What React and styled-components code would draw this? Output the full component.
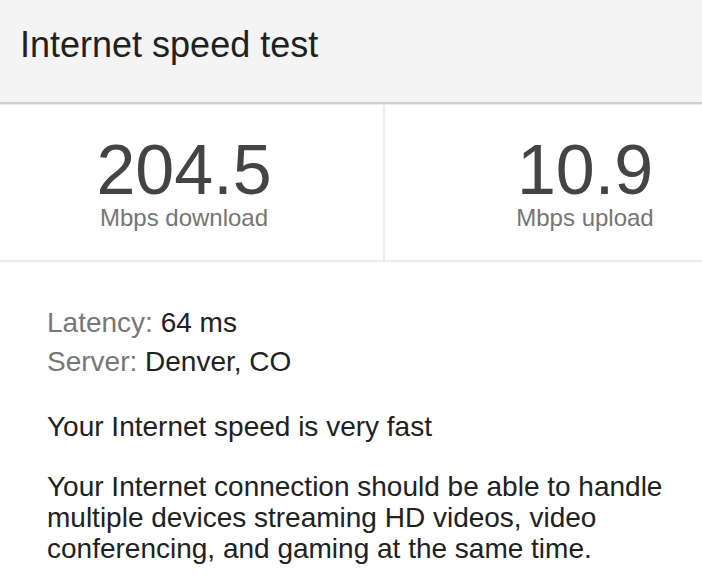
import React from "react";
import styled, { createGlobalStyle } from "styled-components";

const GlobalStyle = createGlobalStyle`
  html, body {
    margin: 0;
    padding: 0;
    background: #ffffff;
  }

  body {
    font-family: "Liberation Sans", Arial, Helvetica, sans-serif;
    color: #222222;
  }
`;

const Card = styled.div`
  width: 702px;
  overflow: hidden;
`;

const Header = styled.header`
  background-color: #f4f4f4;
  padding: 24px 20px 36px;
  border-bottom: 2px solid #cfcfcf;
  box-shadow: 0 1px 0 #ececec;
`;

const Title = styled.h1`
  margin: 0;
  font-size: 36px;
  font-weight: 400;
  line-height: normal;
  color: #212121;
`;

const Stats = styled.div`
  display: grid;
  grid-template-columns: 385px 1fr;
  margin-top: 1px;
  border-bottom: 2px solid #ececec;
`;

const Stat = styled.div`
  display: flex;
  flex-direction: column;
  align-items: center;
  padding: ${({ side }) =>
    side === "left" ? "33px 15px 28px 0" : "33px 0 28px 83px"};
  border-right: ${({ side }) =>
    side === "left" ? "2px solid #ececec" : "none"};
`;

const Value = styled.div`
  font-size: 70px;
  line-height: 64px;
  color: #444444;
`;

const Unit = styled.div`
  margin-top: 2px;
  font-size: 24px;
  line-height: 28px;
  color: #757575;
`;

const Details = styled.div`
  padding: 41px 30px 0 47px;
  font-size: 28px;
`;

const InfoRow = styled.div`
  line-height: 39px;
  color: #212121;
`;

const Label = styled.span`
  color: #777777;
`;

const Paragraph = styled.p`
  margin: ${({ first }) => (first ? "30px 0 0" : "29px 0 0")};
  line-height: 31px;
  color: #212121;
`;

export default function App() {
  return (
    <>
      <GlobalStyle />
      <Card>
        <Header>
          <Title>Internet speed test</Title>
        </Header>
        <Stats>
          <Stat side="left">
            <Value>204.5</Value>
            <Unit>Mbps download</Unit>
          </Stat>
          <Stat side="right">
            <Value>10.9</Value>
            <Unit>Mbps upload</Unit>
          </Stat>
        </Stats>
        <Details>
          <InfoRow>
            <Label>Latency:</Label> 64 ms
          </InfoRow>
          <InfoRow>
            <Label>Server:</Label> Denver, CO
          </InfoRow>
          <Paragraph first>Your Internet speed is very fast</Paragraph>
          <Paragraph>
            Your Internet connection should be able to handle multiple devices
            streaming HD videos, video conferencing, and gaming at the same
            time.
          </Paragraph>
        </Details>
      </Card>
    </>
  );
}
